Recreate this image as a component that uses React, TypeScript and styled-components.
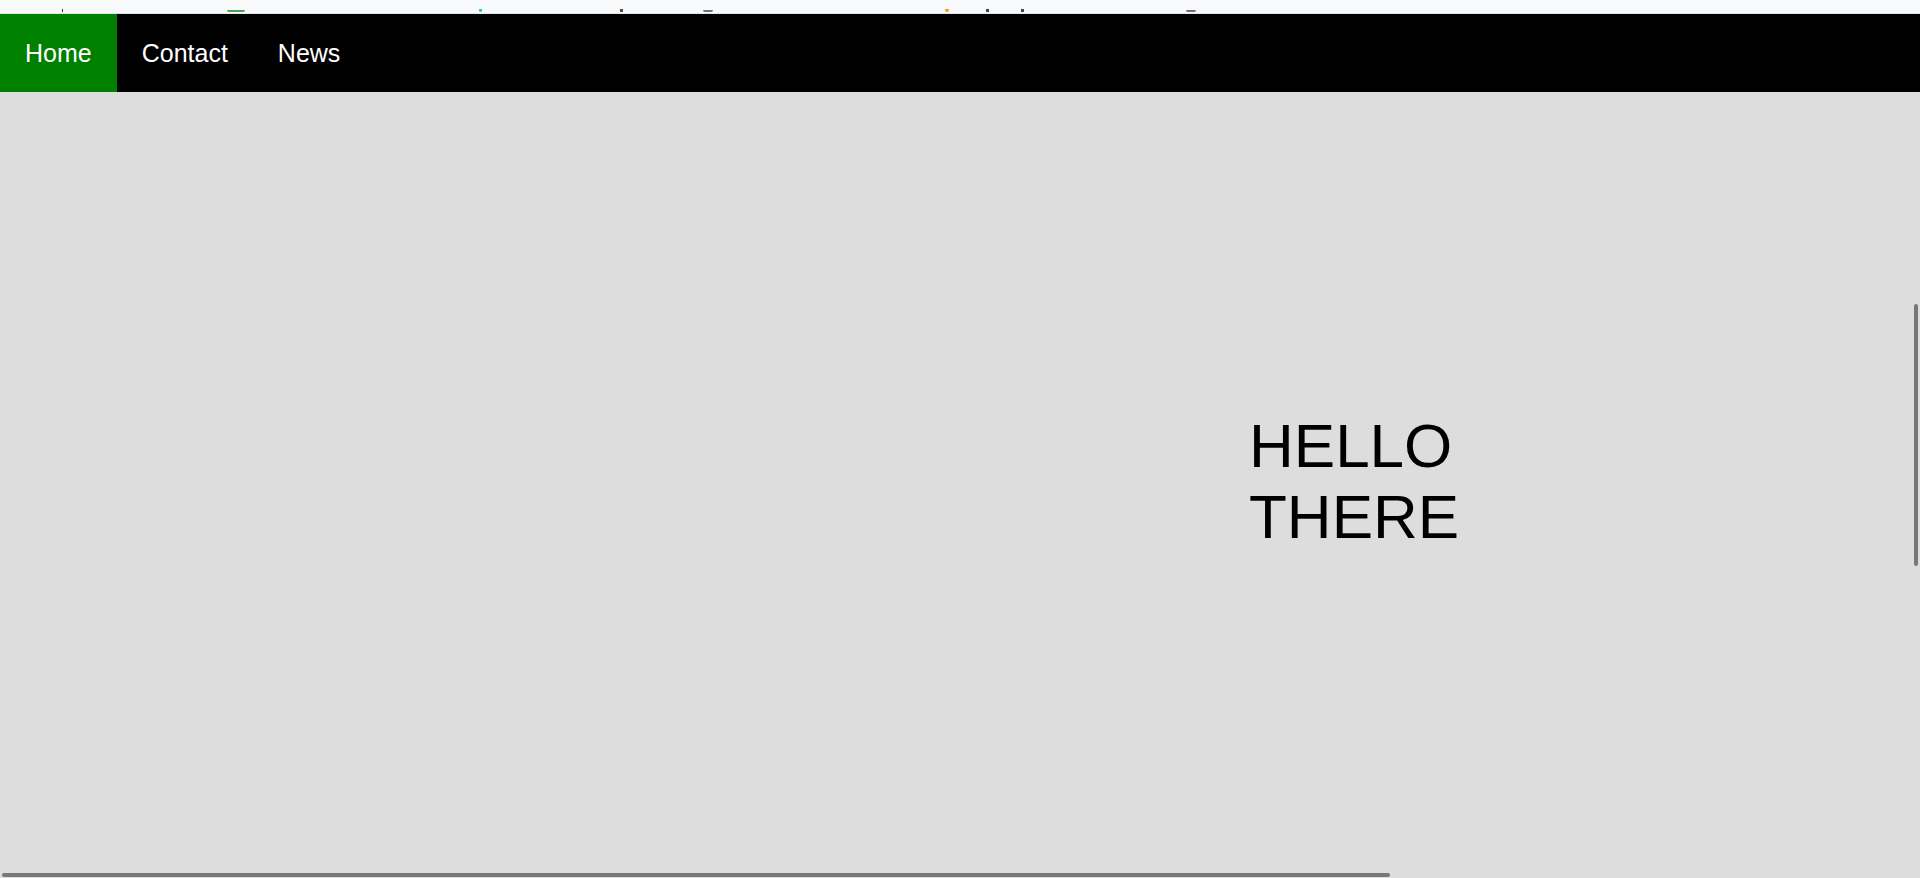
import React from "react";
import styled, { createGlobalStyle } from "styled-components";

const Global = createGlobalStyle`
  html, body {
    margin: 0;
    padding: 0;
    height: 100%;
    overflow: hidden;
    background: #dddddd;
    font-family: "Liberation Sans", Arial, sans-serif;
  }
  #root { height: 100%; }
`;

const Page = styled.div`
  position: relative;
  height: 100%;
  display: flex;
  flex-direction: column;
`;

const Bookmarks = styled.div`
  height: 13px;
  flex: 0 0 13px;
  background: #f8f9fb;
  border-bottom: 1px solid #e3e4e8;
  display: flex;
  align-items: flex-end;
  overflow: hidden;
`;

const Mark = styled.span<{ $at: number; $w: number; $h: number; $c: string; $round?: boolean }>`
  display: block;
  margin-left: ${(p) => p.$at}px;
  width: ${(p) => p.$w}px;
  height: ${(p) => p.$h}px;
  background: ${(p) => p.$c};
  border-radius: ${(p) => (p.$round ? "0 0 4px 4px" : "0")};
  margin-bottom: 1px;
`;

const Nav = styled.nav`
  display: flex;
  height: 78px;
  flex: 0 0 78px;
  background: #000000;
`;

const NavLink = styled.a<{ $active?: boolean }>`
  display: block;
  padding: 25px 25px 0;
  font-size: 25px;
  line-height: normal;
  color: #ffffff;
  text-decoration: none;
  background: ${(p) => (p.$active ? "#008000" : "transparent")};
`;

const Main = styled.main`
  flex: 1;
  background: #dddddd;
  padding: 318px 0 0 1249px;
`;

const Hello = styled.h1`
  margin: 0;
  font-weight: 400;
  font-size: 62px;
  line-height: normal;
  color: #000000;
  text-align: left;
`;

const VScroll = styled.div`
  position: absolute;
  right: 2px;
  top: 304px;
  width: 4px;
  height: 262px;
  border-radius: 2px;
  background: #787878;
`;

const HScroll = styled.div`
  position: absolute;
  left: 2px;
  bottom: 1px;
  width: 1388px;
  height: 4px;
  border-radius: 2px;
  background: #787878;
`;

export default function App() {
  return (
    <Page>
      <Global />
      <Bookmarks>
        <Mark $at={62} $w={1} $h={3} $c="#333" />
        <Mark $at={164} $w={18} $h={2} $c="#3fa65a" $round />
        <Mark $at={234} $w={3} $h={3} $c="#23c8c8" $round />
        <Mark $at={138} $w={3} $h={3} $c="#5a4a3a" />
        <Mark $at={80} $w={10} $h={2} $c="#707070" $round />
        <Mark $at={232} $w={4} $h={3} $c="#f0a020" $round />
        <Mark $at={37} $w={3} $h={3} $c="#444" />
        <Mark $at={32} $w={3} $h={3} $c="#444" />
        <Mark $at={162} $w={10} $h={2} $c="#707070" $round />
      </Bookmarks>
      <Nav>
        <NavLink href="#" $active>Home</NavLink>
        <NavLink href="#">Contact</NavLink>
        <NavLink href="#">News</NavLink>
      </Nav>
      <Main>
        <Hello>
          HELLO
          <br />
          THERE
        </Hello>
      </Main>
      <VScroll />
      <HScroll />
    </Page>
  );
}
